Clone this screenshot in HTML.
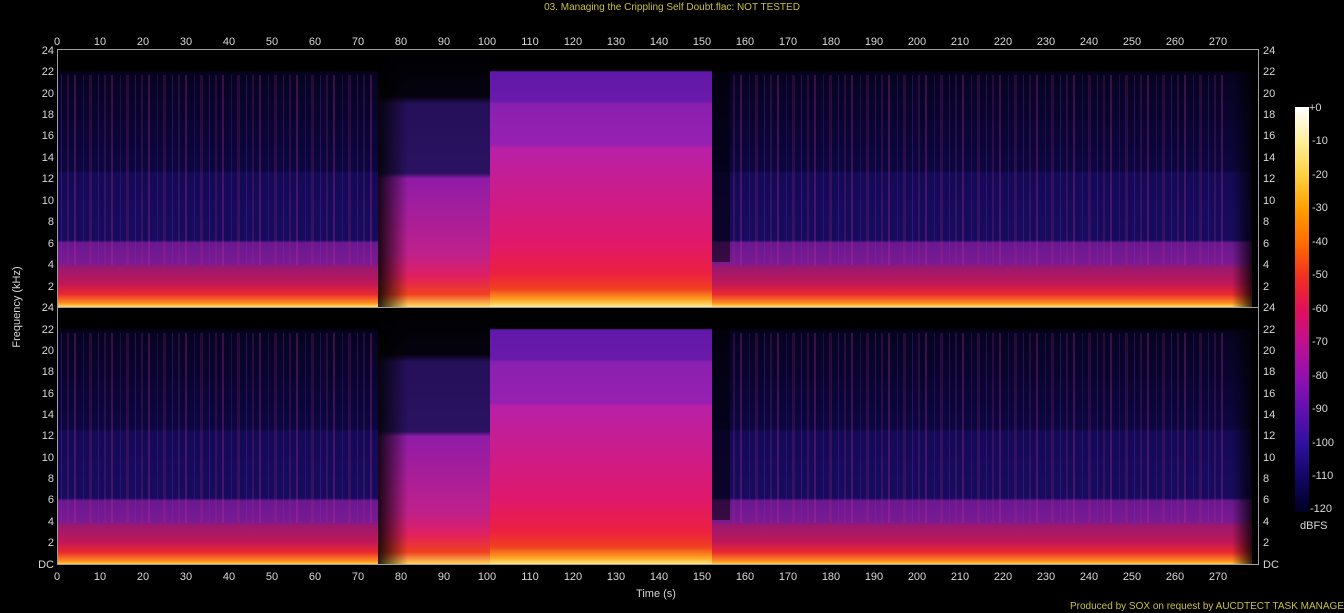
<!DOCTYPE html>
<html><head><meta charset="utf-8"><style>
html,body{margin:0;padding:0;background:#000;width:1344px;height:613px;overflow:hidden}
svg{display:block}
text{font-family:"Liberation Sans",sans-serif;font-size:11px;fill:#d8d8d8}
</style></head><body>
<svg width="1344" height="613" viewBox="0 0 1344 613" xmlns="http://www.w3.org/2000/svg">
<defs>
<linearGradient id="gA" x1="0" y1="0" x2="0" y2="1">
<stop offset="0" stop-color="#000"/><stop offset="0.08" stop-color="#000"/>
<stop offset="0.09" stop-color="#060320"/><stop offset="0.47" stop-color="#0c0640"/>
<stop offset="0.48" stop-color="#140a55"/><stop offset="0.74" stop-color="#180b5e"/>
<stop offset="0.75" stop-color="#6a1890"/><stop offset="0.83" stop-color="#7a1a92"/>
<stop offset="0.845" stop-color="#9a1870"/><stop offset="0.91" stop-color="#c01858"/>
<stop offset="0.95" stop-color="#e82830"/><stop offset="0.985" stop-color="#ff9020"/>
<stop offset="1" stop-color="#ffe060"/></linearGradient>
<linearGradient id="gB" x1="0" y1="0" x2="0" y2="1">
<stop offset="0" stop-color="#000"/><stop offset="0.18" stop-color="#05020f"/>
<stop offset="0.21" stop-color="#25105a"/><stop offset="0.48" stop-color="#2a1260"/>
<stop offset="0.5" stop-color="#901ca8"/><stop offset="0.8" stop-color="#c0208a"/>
<stop offset="0.88" stop-color="#e02060"/><stop offset="0.95" stop-color="#f04020"/>
<stop offset="1" stop-color="#ffe060"/></linearGradient>
<linearGradient id="gC" x1="0" y1="0" x2="0" y2="1">
<stop offset="0" stop-color="#000"/><stop offset="0.08" stop-color="#000"/>
<stop offset="0.085" stop-color="#6018a8"/><stop offset="0.2" stop-color="#6a1aaa"/>
<stop offset="0.21" stop-color="#8a20b0"/><stop offset="0.37" stop-color="#9820b0"/>
<stop offset="0.38" stop-color="#b820a8"/><stop offset="0.75" stop-color="#e0186a"/>
<stop offset="0.87" stop-color="#ec2040"/><stop offset="0.93" stop-color="#f04020"/>
<stop offset="0.97" stop-color="#ffa020"/><stop offset="1" stop-color="#fff090"/></linearGradient>
<linearGradient id="cb" x1="0" y1="0" x2="0" y2="1">
<stop offset="0" stop-color="#fff"/><stop offset="0.08" stop-color="#fff0a0"/>
<stop offset="0.17" stop-color="#ffd040"/><stop offset="0.25" stop-color="#ffa000"/>
<stop offset="0.33" stop-color="#ff7000"/><stop offset="0.42" stop-color="#f03020"/>
<stop offset="0.5" stop-color="#e0105a"/><stop offset="0.58" stop-color="#c01090"/>
<stop offset="0.67" stop-color="#9010b0"/><stop offset="0.75" stop-color="#6010b0"/>
<stop offset="0.83" stop-color="#3010a0"/><stop offset="0.92" stop-color="#100660"/>
<stop offset="1" stop-color="#000020"/></linearGradient>
<linearGradient id="rampL" x1="0" y1="0" x2="1" y2="0">
<stop offset="0" stop-color="#000" stop-opacity="0.85"/><stop offset="1" stop-color="#000" stop-opacity="0"/></linearGradient>
<linearGradient id="rampR" x1="0" y1="0" x2="1" y2="0">
<stop offset="0" stop-color="#000" stop-opacity="0"/><stop offset="1" stop-color="#000" stop-opacity="0.8"/></linearGradient>
<pattern id="st" width="37" height="10" patternUnits="userSpaceOnUse">
<rect x="0" y="0" width="2" height="10" fill="#c030a0" opacity="0.28"/>
<rect x="9" y="0" width="1" height="10" fill="#6020a0" opacity="0.3"/>
<rect x="15" y="0" width="3" height="10" fill="#b02890" opacity="0.2"/>
<rect x="24" y="0" width="1" height="10" fill="#8030c0" opacity="0.3"/>
<rect x="30" y="0" width="2" height="10" fill="#a02890" opacity="0.22"/></pattern>
<g id="chan">
<rect x="58" y="0" width="320" height="257" fill="url(#gA)"/>
<rect x="378" y="0" width="112" height="257" fill="url(#gB)"/>
<rect x="378" y="0" width="30" height="257" fill="url(#rampL)"/>
<rect x="490" y="0" width="222" height="257" fill="url(#gC)"/>
<rect x="712" y="0" width="540" height="257" fill="url(#gA)"/>
<rect x="58" y="25" width="320" height="190" fill="url(#st)"/>
<rect x="730" y="25" width="500" height="190" fill="url(#st)"/>
<rect x="712" y="0" width="18" height="212" fill="#000" opacity="0.55"/>
<rect x="1232" y="0" width="20" height="257" fill="url(#rampR)"/>
</g>
</defs>
<text x="672" y="10" text-anchor="middle" style="fill:#c8c040;font-size:10px">03. Managing the Crippling Self Doubt.flac: NOT TESTED</text>
<use href="#chan" y="50"/>
<use href="#chan" y="308"/>
<rect x="57.5" y="49.5" width="1201" height="515" fill="none" stroke="#a0a0a0"/>
<line x1="57" y1="307.5" x2="1259" y2="307.5" stroke="#a0a0a0"/>
<g text-anchor="middle">
<text x="57" y="45">0</text><text x="100" y="45">10</text><text x="143" y="45">20</text><text x="186" y="45">30</text><text x="229" y="45">40</text><text x="272" y="45">50</text><text x="315" y="45">60</text><text x="358" y="45">70</text><text x="401" y="45">80</text><text x="444" y="45">90</text><text x="487" y="45">100</text><text x="530" y="45">110</text><text x="573" y="45">120</text><text x="616" y="45">130</text><text x="659" y="45">140</text><text x="702" y="45">150</text><text x="745" y="45">160</text><text x="788" y="45">170</text><text x="831" y="45">180</text><text x="874" y="45">190</text><text x="917" y="45">200</text><text x="960" y="45">210</text><text x="1003" y="45">220</text><text x="1046" y="45">230</text><text x="1089" y="45">240</text><text x="1132" y="45">250</text><text x="1175" y="45">260</text><text x="1218" y="45">270</text>
<text x="57" y="580">0</text><text x="100" y="580">10</text><text x="143" y="580">20</text><text x="186" y="580">30</text><text x="229" y="580">40</text><text x="272" y="580">50</text><text x="315" y="580">60</text><text x="358" y="580">70</text><text x="401" y="580">80</text><text x="444" y="580">90</text><text x="487" y="580">100</text><text x="530" y="580">110</text><text x="573" y="580">120</text><text x="616" y="580">130</text><text x="659" y="580">140</text><text x="702" y="580">150</text><text x="745" y="580">160</text><text x="788" y="580">170</text><text x="831" y="580">180</text><text x="874" y="580">190</text><text x="917" y="580">200</text><text x="960" y="580">210</text><text x="1003" y="580">220</text><text x="1046" y="580">230</text><text x="1089" y="580">240</text><text x="1132" y="580">250</text><text x="1175" y="580">260</text><text x="1218" y="580">270</text>
<text x="656" y="597">Time (s)</text>
</g>
<g text-anchor="end">
<text x="54" y="54">24</text><text x="54" y="75">22</text><text x="54" y="97">20</text><text x="54" y="118">18</text><text x="54" y="139">16</text><text x="54" y="161">14</text><text x="54" y="182">12</text><text x="54" y="204">10</text><text x="54" y="225">8</text><text x="54" y="247">6</text><text x="54" y="268">4</text><text x="54" y="290">2</text>
<text x="54" y="311">24</text><text x="54" y="333">22</text><text x="54" y="354">20</text><text x="54" y="375">18</text><text x="54" y="397">16</text><text x="54" y="418">14</text><text x="54" y="439">12</text><text x="54" y="461">10</text><text x="54" y="482">8</text><text x="54" y="503">6</text><text x="54" y="525">4</text><text x="54" y="546">2</text><text x="54" y="568">DC</text>
</g>
<g>
<text x="1263" y="54">24</text><text x="1263" y="75">22</text><text x="1263" y="97">20</text><text x="1263" y="118">18</text><text x="1263" y="139">16</text><text x="1263" y="161">14</text><text x="1263" y="182">12</text><text x="1263" y="204">10</text><text x="1263" y="225">8</text><text x="1263" y="247">6</text><text x="1263" y="268">4</text><text x="1263" y="290">2</text>
<text x="1263" y="311">24</text><text x="1263" y="333">22</text><text x="1263" y="354">20</text><text x="1263" y="375">18</text><text x="1263" y="397">16</text><text x="1263" y="418">14</text><text x="1263" y="439">12</text><text x="1263" y="461">10</text><text x="1263" y="482">8</text><text x="1263" y="503">6</text><text x="1263" y="525">4</text><text x="1263" y="546">2</text><text x="1263" y="568">DC</text>
</g>
<text transform="translate(20,307) rotate(-90)" text-anchor="middle">Frequency (kHz)</text>
<rect x="1295" y="107" width="14" height="405" fill="url(#cb)"/>
<g>
<text x="1309" y="111">+0</text><text x="1312" y="144">-10</text><text x="1312" y="178">-20</text><text x="1312" y="211">-30</text><text x="1312" y="245">-40</text><text x="1312" y="278">-50</text><text x="1312" y="312">-60</text><text x="1312" y="345">-70</text><text x="1312" y="379">-80</text><text x="1312" y="412">-90</text><text x="1312" y="446">-100</text><text x="1312" y="479">-110</text><text x="1310" y="512">-120</text>
<text x="1300" y="529">dBFS</text>
</g>
<text x="1070" y="609" style="fill:#c8c040;font-size:10px">Produced by SOX on request by AUCDTECT TASK MANAGER</text>
</svg>
</body></html>
